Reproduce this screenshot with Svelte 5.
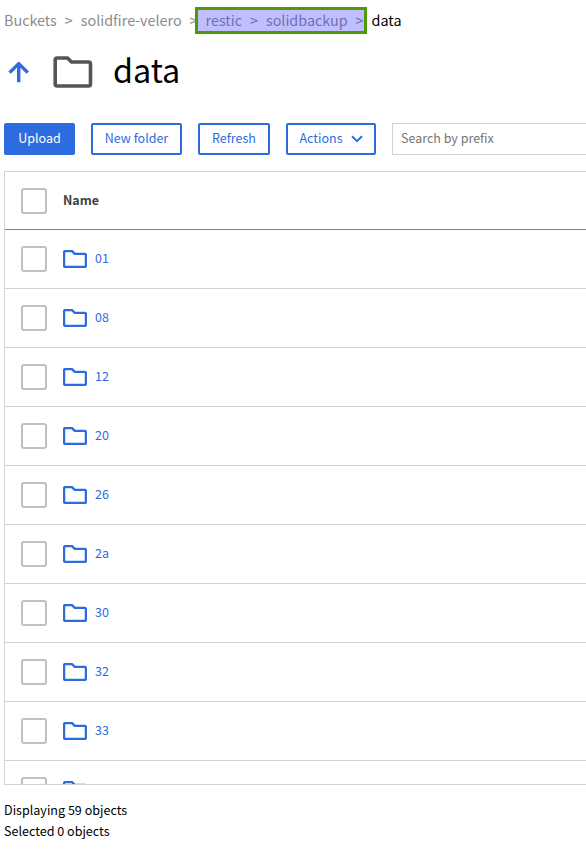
<script>
  const crumbs = ['Buckets', 'solidfire-velero', 'restic', 'solidbackup'];
  const folders = ['01', '08', '12', '20', '26', '2a', '30', '32', '33'];
</script>

{#snippet folder()}
  <svg class="folder" viewBox="0 0 24 18" fill="none" stroke="currentColor" stroke-width="2.3" stroke-linejoin="round">
    <path d="M1.1 15.9V2.1Q1.1 1.1 2.1 1.1H9L11.8 3.9H21.9Q22.9 3.9 22.9 4.9V15.9Q22.9 16.9 21.9 16.9H2.1Q1.1 16.9 1.1 15.9Z" />
  </svg>
{/snippet}

<main>
  <nav>
    {#each crumbs as crumb, index}
      <a class:marked={index > 1} href="#top">{crumb}</a><i class:marked={index > 1}>&gt;</i>
    {/each}
    <b>data</b>
    <div class="highlight"></div>
  </nav>

  <header>
    <svg class="up" viewBox="0 0 22 22" fill="none" stroke="#2d6cdf" stroke-width="3.4" stroke-linejoin="round">
      <path d="M10.7 21.2V3M1.6 11.6 10.7 2.6 19.8 11.6" />
    </svg>
    <svg class="big" viewBox="0 0 40 32" fill="none" stroke="#555" stroke-width="3.6" stroke-linejoin="round">
      <path d="M2.2 28V4Q2.2 2 4.2 2H14.5L18.5 6H35.5Q37.5 6 37.5 8V28Q37.5 30 35.5 30H4.2Q2.2 30 2.2 28Z" />
    </svg>
    <h1>data</h1>
  </header>

  <div class="toolbar">
    <button class="primary" style:width="71px">Upload</button>
    <button style:width="91px">New folder</button>
    <button style:width="72px">Refresh</button>
    <button style:width="90px">
      Actions
      <svg class="chevron" viewBox="0 0 12 8" fill="none" stroke="currentColor" stroke-width="2"><path d="M1 1.2 6 6.2 11 1.2" /></svg>
    </button>
    <input placeholder="Search by prefix" />
  </div>

  <section>
    <div class="row head"><span class="check"></span><strong>Name</strong></div>
    {#each folders as name}
      <div class="row"><span class="check"></span>{@render folder()}<a href="#top">{name}</a></div>
    {/each}
    <div class="row"><span class="check"></span>{@render folder()}</div>
  </section>

  <footer>
    <div>Displaying 59 objects</div>
    <div>Selected 0 objects</div>
  </footer>
</main>

<style>
  :global(body) {
    background: #fff;
    overflow: hidden;
  }
  main {
    height: 855px;
    overflow: hidden;
    padding-left: 4px;
    box-sizing: border-box;
    font-family: 'Noto Sans CJK SC', 'Noto Sans', sans-serif;
    font-size: 12.5px;
    color: #000;
  }
  a {
    text-decoration: none;
    color: inherit;
  }
  nav {
    position: relative;
    display: flex;
    height: 40px;
    line-height: 40px;
    font-size: 14.35px;
    color: #8c8c8c;
    white-space: nowrap;
  }
  nav i {
    font-style: normal;
    margin: 0 8px;
  }
  nav .marked {
    color: #606060;
  }
  nav b {
    font-weight: 400;
    color: #000;
  }
  .highlight {
    position: absolute;
    left: 191px;
    top: 7px;
    width: 171.5px;
    height: 27px;
    box-sizing: border-box;
    border: 3px solid #4e9a06;
    background: rgba(128, 128, 255, 0.5);
  }
  header {
    display: flex;
    height: 83px;
    align-items: flex-start;
  }
  .up {
    width: 22px;
    height: 22px;
    margin: 21px 0 0 4px;
  }
  .big {
    width: 40px;
    height: 32px;
    margin: 16px 0 0 23px;
  }
  h1 {
    margin: 4px 0 0 20px;
    font-size: 32.3px;
    line-height: 50px;
    font-weight: 400;
  }
  .toolbar {
    display: flex;
    gap: 16px;
    height: 32px;
    width: 700px;
  }
  button {
    display: flex;
    align-items: center;
    justify-content: center;
    height: 32px;
    padding: 0 0 2px;
    box-sizing: border-box;
    border: 2px solid #2d6cdf;
    border-radius: 2px;
    background: #fff;
    color: #2d6cdf;
    font: inherit;
    line-height: 20px;
    white-space: nowrap;
    flex: none;
  }
  .primary {
    background: #2d6cdf;
    color: #fff;
  }
  .chevron {
    width: 12px;
    height: 8px;
    margin: 2px 0 0 8px;
  }
  input {
    flex: 1;
    box-sizing: border-box;
    height: 32px;
    border: 1px solid #d2d2d2;
    padding: 0 8px 3px;
    font: inherit;
  }
  input::placeholder {
    color: #757575;
    opacity: 1;
  }
  section {
    width: 700px;
    height: 614px;
    margin-top: 16px;
    box-sizing: border-box;
    border: 1px solid #d2d2d2;
    overflow: hidden;
  }
  .row {
    display: flex;
    align-items: center;
    height: 59px;
    box-sizing: border-box;
    border-bottom: 1px solid #d2d2d2;
    padding-left: 16px;
    color: #2d6cdf;
    line-height: 20px;
  }
  .head {
    height: 58px;
    border-bottom-color: #808080;
    color: #404040;
  }
  .check {
    width: 26px;
    height: 26px;
    box-sizing: border-box;
    border: 2px solid #c0c0c0;
    border-radius: 3px;
    margin-right: 16px;
    background: #fff;
  }
  .folder {
    width: 24px;
    height: 18px;
    margin-right: 8px;
  }
  .row a {
    padding-bottom: 2px;
  }
  .row strong {
    padding-bottom: 1px;
  }
  footer {
    margin-top: 14px;
    font-size: 12.55px;
    line-height: 21px;
  }
</style>
